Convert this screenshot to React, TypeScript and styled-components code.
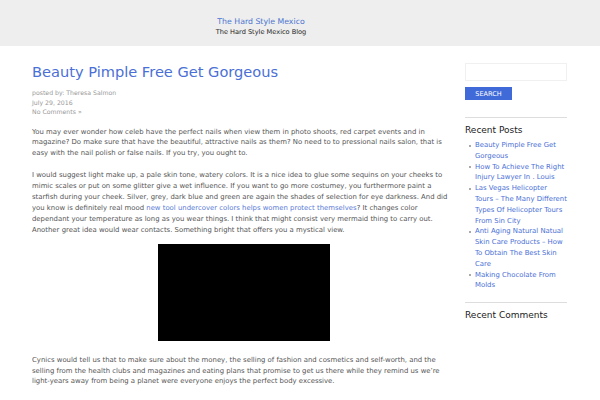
import React from "react";
import styled, { createGlobalStyle } from "styled-components";

const Global = createGlobalStyle`
  html, body { margin: 0; padding: 0; background: #fff; }
  body { font-family: "DejaVu Sans", Verdana, sans-serif; color: #555; }
  * { box-sizing: border-box; }
`;

const Header = styled.header`
  background: #eeeeee;
  height: 46px;
  display: flex;
  flex-direction: column;
  align-items: center;
  padding: 16px 78px 0 0;
`;
const SiteTitle = styled.a`
  color: #4a74d0;
  font-size: 7.8px;
  line-height: 11px;
  text-decoration: none;
`;
const Tagline = styled.div`
  color: #222;
  font-size: 6.6px;
  line-height: 11px;
`;

const Wrap = styled.div`
  display: grid;
  grid-template-columns: 428px 102px;
  column-gap: 5px;
  padding: 0 0 0 32px;
`;
const Main = styled.main`
  min-width: 0;
`;
const PostTitle = styled.h1`
  margin: 16px 0 0;
  font-weight: normal;
  font-size: 14.6px;
  line-height: 20px;
  color: #4a6fd6;
`;
const Meta = styled.div`
  margin-top: 6px;
  font-size: 6.2px;
  line-height: 9.5px;
  color: #999;
`;
const MetaLink = styled.a`
  color: #999;
  text-decoration: none;
`;
const P = styled.p<{ $top?: number }>`
  margin: ${(p) => p.$top ?? 11}px 0 0;
  font-size: 6.9px;
  line-height: 10.9px;
  color: #555;
`;
const Link = styled.a`
  color: #5a7bd6;
  text-decoration: none;
`;
const Video = styled.div`
  width: 172px;
  height: 97px;
  background: #000;
  margin: 8px 0 0 126px;
`;

const Side = styled.aside`
  padding-top: 17px;
`;
const Input = styled.div`
  height: 18px;
  border: 1px solid #f0f0f0;
`;
const Button = styled.button`
  display: block;
  margin-top: 6px;
  width: 47px;
  height: 13px;
  background: #3f6ad8;
  border: none;
  color: #fff;
  font-family: inherit;
  font-size: 6.5px;
  padding: 0;
`;
const Divider = styled.hr<{ $top?: number }>`
  border: none;
  border-top: 1px solid #ddd;
  margin: ${(p) => p.$top ?? 17}px 0 0;
`;
const WidgetTitle = styled.h2`
  font-weight: normal;
  font-size: 9px;
  line-height: 12px;
  color: #222;
  margin: 6px 0 0;
`;
const List = styled.ul`
  margin: 4px 0 0;
  padding: 0 0 0 10px;
  list-style: none;
`;
const Item = styled.li`
  position: relative;
  font-size: 6.9px;
  line-height: 10.8px;
  color: #4a6fd6;
  &::before {
    content: "";
    position: absolute;
    left: -6px;
    top: 4.5px;
    width: 2px;
    height: 2px;
    background: #aaa;
  }
`;

const posts = [
  "Beauty Pimple Free Get Gorgeous",
  "How To Achieve The Right Injury Lawyer In . Louis",
  "Las Vegas Helicopter Tours – The Many Different Types Of Helicopter Tours From Sin City",
  "Anti Aging Natural Natual Skin Care Products – How To Obtain The Best Skin Care",
  "Making Chocolate From Molds",
];

export default function App() {
  return (
    <>
      <Global />
      <Header>
        <SiteTitle href="#">The Hard Style Mexico</SiteTitle>
        <Tagline>The Hard Style Mexico Blog</Tagline>
      </Header>
      <Wrap>
        <Main>
          <PostTitle>Beauty Pimple Free Get Gorgeous</PostTitle>
          <Meta>
            <div>posted by: Theresa Salmon</div>
            <div>July 29, 2016</div>
            <MetaLink href="#">No Comments »</MetaLink>
          </Meta>
          <P $top={10}>
            You may ever wonder how celeb have the perfect nails when view them in photo shoots, red carpet events and in
            <br />
            magazine? Do make sure that have the beautiful, attractive nails as them? No need to to pressional nails salon, that is
            <br />
            easy with the nail polish or false nails. If you try, you ought to.
          </P>
          <P>
            I would suggest light make up, a pale skin tone, watery colors. It is a nice idea to glue some sequins on your cheeks to
            <br />
            mimic scales or put on some glitter give a wet influence. If you want to go more costumey, you furthermore paint a
            <br />
            starfish during your cheek. Silver, grey, dark blue and green are again the shades of selection for eye darkness. And did
            <br />
            you know is definitely real mood <Link href="#">new tool undercover colors helps women protect themselves</Link>? It changes color
            <br />
            dependant your temperature as long as you wear things. I think that might consist very mermaid thing to carry out.
            <br />
            Another great idea would wear contacts. Something bright that offers you a mystical view.
          </P>
          <Video />
          <P $top={14}>
            Cynics would tell us that to make sure about the money, the selling of fashion and cosmetics and self-worth, and the
            <br />
            selling from the health clubs and magazines and eating plans that promise to get us there while they remind us we’re
            <br />
            light-years away from being a planet were everyone enjoys the perfect body excessive.
          </P>
        </Main>
        <Side>
          <Input />
          <Button>SEARCH</Button>
          <Divider />
          <WidgetTitle>Recent Posts</WidgetTitle>
          <List>
            {posts.map((p) => (
              <Item key={p}>{p}</Item>
            ))}
          </List>
          <Divider $top={11} />
          <WidgetTitle>Recent Comments</WidgetTitle>
        </Side>
      </Wrap>
    </>
  );
}
